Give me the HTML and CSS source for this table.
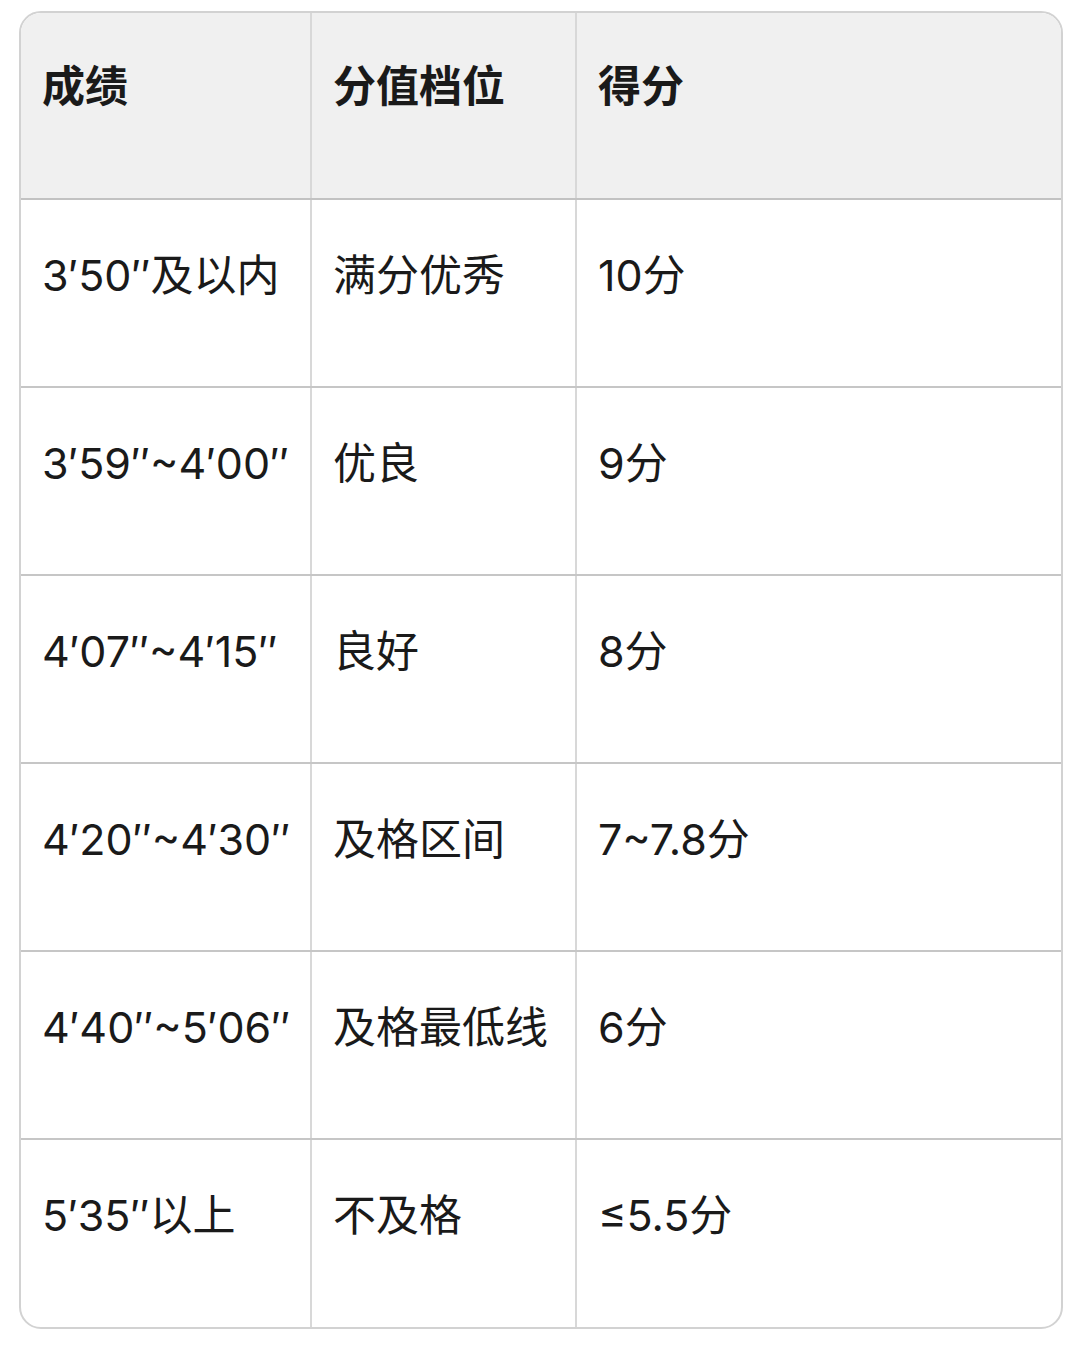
FILE: index.html
```html
<!DOCTYPE html>
<html lang="zh-CN">
<head>
<meta charset="utf-8">
<title>成绩评分表</title>
<link rel="stylesheet" href="styles.css">
</head>
<body>
<div class="card">
  <table class="score">
    <thead>
      <tr><th class="c1">成绩</th><th class="c2">分值档位</th><th class="c3">得分</th></tr>
    </thead>
    <tbody>
      <tr><td>3′50″及以内</td><td>满分优秀</td><td>10分</td></tr>
      <tr><td>3′59″~4′00″</td><td>优良</td><td>9分</td></tr>
      <tr><td>4′07″~4′15″</td><td>良好</td><td>8分</td></tr>
      <tr><td>4′20″~4′30″</td><td>及格区间</td><td>7~7.8分</td></tr>
      <tr><td>4′40″~5′06″</td><td>及格最低线</td><td>6分</td></tr>
      <tr><td>5′35″以上</td><td>不及格</td><td>≤5.5分</td></tr>
    </tbody>
  </table>
</div>
</body>
</html>
```
FILE: styles.css
```css
html, body {
  margin: 0;
  padding: 0;
  background: #ffffff;
}
body {
  padding: 11px 0 0 19px;
  font-family: "Inter", "Noto Sans CJK SC", sans-serif;
  color: #1a1a1a;
}
.card {
  width: 1044px;
  box-sizing: border-box;
  border: 2px solid #d2d2d2;
  border-radius: 22px;
  overflow: hidden;
}
.score {
  width: 100%;
  border-collapse: collapse;
  table-layout: fixed;
}
.score th,
.score td {
  text-align: left;
  vertical-align: top;
  font-size: 43px;
  line-height: 60px;
  padding: 45px 14px 0 21px;
  box-sizing: border-box;
  border-left: 2px solid #d8d8d8;
  white-space: nowrap;
}
.score th:first-child,
.score td:first-child {
  border-left: none;
}
.score th {
  height: 186px;
  padding-top: 43px;
  background: #f0f0f0;
  font-weight: 700;
  border-bottom: 2px solid #c2c2c2;
}
.score td {
  height: 188px;
  font-weight: 400;
  border-bottom: 2px solid #c6c6c6;
}
.score tbody tr:last-child td {
  border-bottom: none;
}
.c1 { width: 290px; }
.c2 { width: 265px; }
.c3 { width: auto; }
```
